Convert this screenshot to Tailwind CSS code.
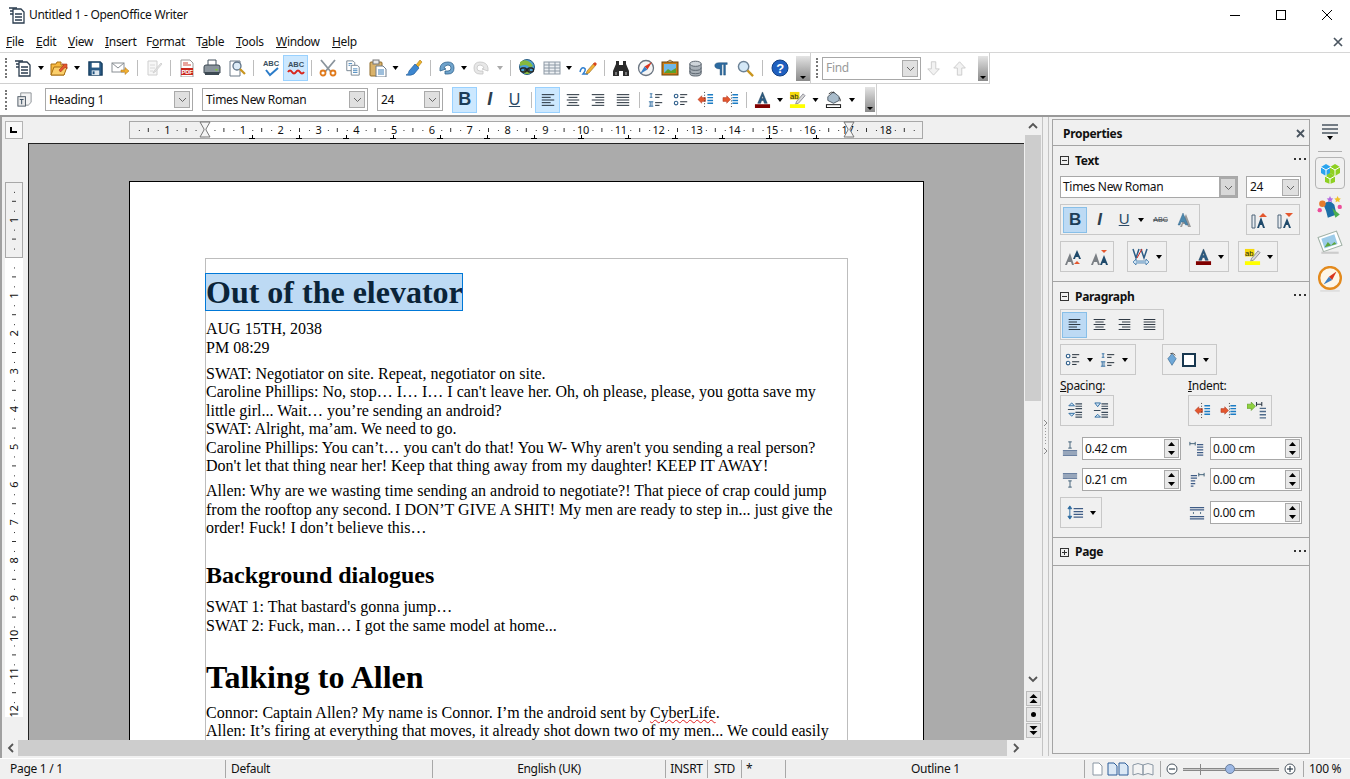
<!DOCTYPE html>
<html lang="en">
  <head>
    <meta charset="UTF-8" />
    <title>Untitled 1 - OpenOffice Writer</title>
    <script src="https://cdn.jsdelivr.net/npm/@tailwindcss/browser@4"></script>
  </head>
  <body class="bg-white">
    <!-- Icon sprite -->
    <svg class="hidden">
      <symbol id="new" viewBox="0 0 18 18"><path d="M5 3h8l3 3v11H5z" fill="#fff" stroke="#2b3d4f" stroke-width="1.300"/><path d="M1 2h8M2 5h3M2 8h3M7 8h7M7 11h7M7 14h7" stroke="#2b3d4f" stroke-width="1.300"/></symbol>
      <symbol id="open" viewBox="0 0 18 18"><path d="M1 5h5l1-2h4v3h5l-2 10H1z" fill="#f6b83f" stroke="#a86f12"/><path d="M1 16l3-8h13l-3 8z" fill="#fbcf6b" stroke="#a86f12"/><path d="M9 11l5-5-2-1h5v5l-1.500-2-5 5z" fill="#e4572e" stroke="#a8321b" stroke-width=".6"/></symbol>
      <symbol id="save" viewBox="0 0 18 18"><path d="M2 2h12l2 2v12H2z" fill="#2a5a85" stroke="#123a5c" stroke-width="1.300"/><rect x="5" y="3" width="8" height="5" fill="#fff"/><rect x="5" y="11" width="8" height="5" fill="#dfe8ef"/><rect x="6" y="12" width="2" height="3" fill="#1f527f"/></symbol>
      <symbol id="mail" viewBox="0 0 18 18"><rect x="1" y="4" width="12" height="9" fill="#fff" stroke="#8a8f94"/><path d="M1 4l6 5 6-5" fill="none" stroke="#8a8f94"/><path d="M10 11h4V8.500l4 3.500-4 3.500V13h-4z" fill="#f2b134" stroke="#a86f12" stroke-width=".5"/></symbol>
      <symbol id="editdoc" viewBox="0 0 18 18"><path d="M3 2h9v14H3z" fill="#f7f7f7" stroke="#cfcfcf"/><path d="M5 6h5M5 9h5M5 12h3" stroke="#d8d8d8"/><path d="M9 12l7-8 1 1-7 8-2 1z" fill="#e6e6e6" stroke="#c8c8c8" stroke-width=".7"/></symbol>
      <symbol id="pdf" viewBox="0 0 18 18"><path d="M3 1h9l3 3v14H3z" fill="#fff" stroke="#9a9a9a"/><path d="M5 4h5M5 6h8" stroke="#d24a3c"/><rect x="3" y="9" width="12" height="7" fill="#c9281e"/><text x="9" y="15" font-size="6" font-weight="700" text-anchor="middle" fill="#fff" font-family="Liberation Sans">PDF</text></symbol>
      <symbol id="print" viewBox="0 0 18 18"><path d="M5 1h8v6H5z" fill="#fff" stroke="#44525f"/><path d="M1 8q0-2 2-2h12q2 0 2 2v6H1z" fill="#8b959d" stroke="#3c4852"/><rect x="2" y="13" width="14" height="3" fill="#3c4852"/><rect x="12.500" y="10" width="2" height="1.500" fill="#7ed321"/></symbol>
      <symbol id="preview" viewBox="0 0 18 18"><path d="M2 2h10v15H2z" fill="#fff" stroke="#6d7b88"/><circle cx="9" cy="7" r="4" fill="#dcebf7" stroke="#5d7388" stroke-width="1.300"/><path d="M12 10l5 5" stroke="#c9951e" stroke-width="2.200"/></symbol>
      <symbol id="spell" viewBox="0 0 18 18"><text x="9" y="7" font-size="7.500" font-weight="700" text-anchor="middle" fill="#3c4f60" font-family="Liberation Sans" letter-spacing="0">ABC</text><path d="M4 11l4 5 8-7" fill="none" stroke="#2b7cc9" stroke-width="2"/></symbol>
      <symbol id="autospell" viewBox="0 0 18 18"><text x="9" y="8" font-size="7.500" font-weight="700" text-anchor="middle" fill="#3c4f60" font-family="Liberation Sans" letter-spacing="0">ABC</text><path d="M1 13q2-3 4 0t4 0 4 0 4 0" fill="none" stroke="#d8261c" stroke-width="2"/></symbol>
      <symbol id="cut" viewBox="0 0 18 18"><path d="M2 1l10 12M16 1L6 13" stroke="#8a949c" stroke-width="1.800"/><circle cx="4" cy="14" r="2.500" fill="none" stroke="#e07a1c" stroke-width="1.800"/><circle cx="14" cy="14" r="2.500" fill="none" stroke="#e07a1c" stroke-width="1.800"/></symbol>
      <symbol id="copy" viewBox="0 0 18 18"><path d="M2 1h7l2 2v9H2z" fill="#fff" stroke="#6e7d8b"/><path d="M7 6h7l2 2v9H7z" fill="#fff" stroke="#6e7d8b"/><path d="M4 4h4M4 6h2M9 10h5M9 12h5M9 14h5" stroke="#3d7fb8"/></symbol>
      <symbol id="paste" viewBox="0 0 18 18"><rect x="1" y="3" width="12" height="14" rx="1" fill="#d9b26a" stroke="#8f6b2a"/><rect x="4" y="1" width="6" height="4" fill="#e8e8e8" stroke="#777"/><path d="M7 7h7l3 3v8H7z" fill="#fff" stroke="#6e7d8b"/><path d="M9 11h6M9 13h6M9 15h6" stroke="#3d7fb8"/></symbol>
      <symbol id="brush" viewBox="0 0 18 18"><path d="M11 6l4-5 2 2-4 5z" fill="#f0b429" stroke="#a8781a" stroke-width=".6"/><path d="M10 5l4 4-5 6q-3 2-8 1 3-1 3-4z" fill="#3d86cf" stroke="#1f5c99" stroke-width=".7"/></symbol>
      <symbol id="undo" viewBox="0 0 18 18"><path d="M3 9q1-6 8-6 6 0 6 6t-6 6H8v-3h3q3 0 3-3t-3-3q-3 0-4 3l2 1-6 2z" fill="#6fa3cc" stroke="#2f628c" stroke-width=".8"/></symbol>
      <symbol id="redo" viewBox="0 0 18 18"><path d="M15 9q-1-6-8-6-6 0-6 6t6 6h3v-3H7q-3 0-3-3t3-3q3 0 4 3l-2 1 6 2z" fill="#e7e7e7" stroke="#c4c4c4" stroke-width=".8"/></symbol>
      <symbol id="globe" viewBox="0 0 18 18"><circle cx="9" cy="8" r="7.500" fill="#4aa0d8" stroke="#2a5d80"/><path d="M2 3q4-3 8-1t5 5q-3 2-5 0T2 7zM5 12q4-1 8 0l-2 3H7z" fill="#86b93f"/><rect x="2.500" y="9" width="6" height="4" rx="2" fill="none" stroke="#222" stroke-width="1.300"/><rect x="9.500" y="9" width="6" height="4" rx="2" fill="none" stroke="#222" stroke-width="1.300"/><path d="M6 11h6" stroke="#222" stroke-width="1.300"/></symbol>
      <symbol id="table" viewBox="0 0 18 18"><rect x="1" y="3" width="16" height="12" fill="#eef1f4" stroke="#8d99a5"/><path d="M1 6h16M1 9h16M1 12h16M6 3v12M12 3v12" stroke="#8d99a5"/></symbol>
      <symbol id="draw" viewBox="0 0 18 18"><path d="M1 13q1-5 4-4t-1 6h5" fill="none" stroke="#2f7fd0" stroke-width="1.500"/><path d="M8 12l7-8 2 2-7 8-3 1z" fill="#f2b134" stroke="#8f6b2a" stroke-width=".6"/><path d="M14 5l2-2 2 2-2 2z" fill="#d8431f"/></symbol>
      <symbol id="binoc" viewBox="0 0 18 18"><path d="M4 2h3v4h4V2h3v3l3 7v5h-6v-5H7v5H1v-5l3-7z" fill="#2b2b2b"/><path d="M3 13h2v3H3zM13 13h2v3h-2z" fill="#777"/></symbol>
      <symbol id="compass" viewBox="0 0 18 18"><circle cx="9" cy="9" r="7.500" fill="#f5f5f5" stroke="#6a7480" stroke-width="1.300"/><path d="M15 3L7.500 7.500l3 3z" fill="#d8351f"/><path d="M3 15l4.500-7.500 3 3z" fill="#3d7fc4"/></symbol>
      <symbol id="gallery" viewBox="0 0 18 18"><path d="M6 3l3-2 3 2" fill="none" stroke="#8f6b2a"/><rect x="1" y="3" width="16" height="13" fill="#c87c15" stroke="#6d4208"/><rect x="3" y="5" width="12" height="9" fill="#6fb7e6"/><path d="M3 14l4-4 3 2 5-3v5z" fill="#5aa02c"/></symbol>
      <symbol id="db" viewBox="0 0 18 18"><path d="M3 4v10q0 3 6 3t6-3V4" fill="#a9b1b8" stroke="#59636c"/><ellipse cx="9" cy="4" rx="6" ry="2.700" fill="#cfd5da" stroke="#59636c"/><path d="M3 8q0 3 6 3t6-3M3 11.500q0 3 6 3t6-3" fill="none" stroke="#59636c"/></symbol>
      <symbol id="pilcrow" viewBox="0 0 18 18"><path d="M7 3h9v2h-2v12h-2V5h-2v12H8V10Q2 10 2 6.500T7 3z" fill="#2c6aa0" stroke="#1d4a72" stroke-width=".5"/></symbol>
      <symbol id="zoom" viewBox="0 0 18 18"><circle cx="7" cy="7" r="5.500" fill="#d4e8f7" stroke="#6c8296" stroke-width="1.500"/><path d="M11 11l6 6" stroke="#c9951e" stroke-width="2.500"/></symbol>
      <symbol id="help" viewBox="0 0 18 18"><circle cx="9" cy="9" r="8" fill="#1f5fbf" stroke="#134183"/><text x="9" y="14" font-size="13" font-weight="700" text-anchor="middle" fill="#fff" font-family="Liberation Sans">?</text></symbol>
      <symbol id="fdown" viewBox="0 0 18 18"><path d="M6 2h5v8h4l-6.500 7L2 10h4z" fill="#f2f2f2" stroke="#c9c9c9"/></symbol>
      <symbol id="fup" viewBox="0 0 18 18"><path d="M6 17h5V9h4L8.500 2 2 9h4z" fill="#f2f2f2" stroke="#c9c9c9"/></symbol>
      <symbol id="style" viewBox="0 0 18 18"><path d="M5 2h11v10l-3 3H5z" fill="#f4f4f4" stroke="#8a8f94"/><rect x="2" y="6" width="8" height="10" fill="#e8e8e8" stroke="#4e5a66"/><path d="M4 9h4M6 9v5" stroke="#34495e"/></symbol>
      <symbol id="left" viewBox="0 0 18 18"><path d="M2 3h14M2 6h10M2 9h14M2 12h10M2 15h14" stroke="#1f2a35" stroke-width="1.100"/></symbol>
      <symbol id="center" viewBox="0 0 18 18"><path d="M2 3h14M4 6h10M2 9h14M4 12h10M2 15h14" stroke="#1f2a35" stroke-width="1.100"/></symbol>
      <symbol id="right" viewBox="0 0 18 18"><path d="M2 3h14M6 6h10M2 9h14M6 12h10M2 15h14" stroke="#1f2a35" stroke-width="1.100"/></symbol>
      <symbol id="just" viewBox="0 0 18 18"><path d="M2 3h14M2 6h14M2 9h14M2 12h14M2 15h14" stroke="#1f2a35" stroke-width="1.100"/></symbol>
      <symbol id="num" viewBox="0 0 18 18"><path d="M2 2h3M3.500 2v4M2 6h3M1 11h5M2.500 11v5M4.500 11v5M1 16h5" stroke="#2c6aa0"/><path d="M8 3h8M8 6h5M8 12h8M8 15h5" stroke="#1f2a35" stroke-width="1.100"/></symbol>
      <symbol id="bul" viewBox="0 0 18 18"><circle cx="3.500" cy="4.500" r="2" fill="#fff" stroke="#2c5d8a" stroke-width="1.200"/><circle cx="3.500" cy="12.500" r="2" fill="#fff" stroke="#2c5d8a" stroke-width="1.200"/><path d="M8 3h8M8 6h5M8 11h8M8 14h5" stroke="#1f2a35" stroke-width="1.100"/></symbol>
      <symbol id="indless" viewBox="0 0 18 18"><path d="M1 9l4-4v2h4v4H5v2z" fill="#e4572e" stroke="#a8321b" stroke-width=".5"/><path d="M11 4h6M11 7h6M11 10h6M11 13h6" stroke="#1c7cc4" stroke-width="1.500"/><path d="M8 1v16" stroke="#333" stroke-dasharray="1 2"/></symbol>
      <symbol id="indmore" viewBox="0 0 18 18"><path d="M9 9L5 5v2H1v4h4v2z" fill="#e4572e" stroke="#a8321b" stroke-width=".5"/><path d="M11 4h6M11 7h6M11 10h6M11 13h6" stroke="#1c7cc4" stroke-width="1.500"/><path d="M10 1v16" stroke="#333" stroke-dasharray="1 2"/></symbol>
      <symbol id="hang" viewBox="0 0 18 18"><path d="M8 5L4 1v2H0v4h4v2z" fill="#8fd13f" stroke="#4c8a14" stroke-width=".5"/><path d="M9 3h5M9 1v4M14 1v4" stroke="#2e3a46"/><path d="M12 7h6M12 10h6M12 13h6M12 16h6" stroke="#4f6b8a" stroke-width="1.300"/></symbol>
      <symbol id="color" viewBox="0 0 18 18"><path d="M9 1l5 12h-3l-1-3H8l-1 3H4zM9 5L8 8h2z" fill="#2c5d86" stroke="#17374f" stroke-width=".5"/><rect x="1" y="14" width="16" height="4" fill="#800000"/></symbol>
      <symbol id="high" viewBox="0 0 18 18"><rect x="1" y="1" width="10" height="8" fill="#f5d90a"/><text x="1" y="8" font-size="8" fill="#222" font-family="Liberation Sans" letter-spacing="0">ab</text><path d="M8 11l7-8 2 2-7 8-3 1z" fill="#d8d8d8" stroke="#667" stroke-width=".7"/><rect x="1" y="14" width="16" height="4" fill="#ffff00"/></symbol>
      <symbol id="charbg" viewBox="0 0 18 18"><path d="M3 6l6-5 6 5v4l-6 3-6-3z" fill="#a9bccb" stroke="#4e5a66"/><path d="M4 3q3-3 6-1" fill="none" stroke="#333"/><path d="M15 7q2 2 1 4" stroke="#333" fill="none"/><rect x="1.500" y="14.500" width="15" height="3" fill="#fff" stroke="#111"/></symbol>
      <symbol id="strike" viewBox="0 0 18 18"><text x="9" y="12" font-size="7.500" text-anchor="middle" fill="#3c4f60" font-family="Liberation Sans" letter-spacing="0">ABC</text><path d="M1 9.500h16" stroke="#333"/></symbol>
      <symbol id="shadow" viewBox="0 0 18 18"><path d="M10 3l5 13h-3l-1-3H7l-1 3H4z" fill="#9a9a9a"/><path d="M7 2l5 12H9.500l-1-3H5l-1 3H2z" fill="#4c88ad" stroke="#2c5d86" stroke-width=".4"/></symbol>
      <symbol id="above" viewBox="0 0 18 18"><path d="M1 4h3v13H1z" fill="#e8edf2" stroke="#4e6478"/><path d="M10 6l4 11h-2l-1-3H9l-1 3H6z" fill="#1f4a6b"/><path d="M8 6l4-4 4 4z" fill="#e4572e"/></symbol>
      <symbol id="below" viewBox="0 0 18 18"><path d="M1 4h3v13H1z" fill="#e8edf2" stroke="#4e6478"/><path d="M10 7l4 10h-2l-1-3H9l-1 3H6z" fill="#1f4a6b"/><path d="M8 2h8l-4 4z" fill="#e4572e"/></symbol>
      <symbol id="grow" viewBox="0 0 18 18"><path d="M5 5l4 12H7l-1-3H3l-1 3H0z" fill="#7a7f84"/><path d="M12 2l4 9h-2l-.7-2h-2.600l-.7 2H8z" fill="#1f4a6b"/><path d="M9 16l3-3 3 3z" fill="#e4572e"/></symbol>
      <symbol id="shrink" viewBox="0 0 18 18"><path d="M5 5l4 12H7l-1-3H3l-1 3H0z" fill="#7a7f84"/><path d="M13 7l4 10h-2l-.7-2h-2.600l-.7 2H9z" fill="#1f4a6b"/><path d="M10 2h6l-3 3z" fill="#e4572e"/></symbol>
      <symbol id="kern" viewBox="0 0 18 18"><path d="M1 1l3 9 3-9M9 1l3 9 3-9" fill="none" stroke="#2c5d86" stroke-width="1.500"/><path d="M5 10l5-9" stroke="#d8261c"/><path d="M1 14l3-3v2h10v-2l3 3-3 3v-2H4v2z" fill="#cfe3f3" stroke="#2c6aa0" stroke-width=".7"/></symbol>
      <symbol id="areafill" viewBox="0 0 18 18"><path d="M1 8l5-6 5 6-5 8z" fill="#6fa8d8" stroke="#2c5d86" stroke-width=".7"/><path d="M4 2q3-2 6 2" fill="none" stroke="#333"/></symbol>
      <symbol id="parup" viewBox="0 0 18 18"><path d="M3 4l3-3 3 3zM3 12h6l-3 3z" fill="#cfe3f3" stroke="#2c6aa0"/><path d="M10 2h7M10 4.500h7M10 7h7M2 8h7M10 11h7M10 13.500h7M10 16h7" stroke="#3a4a5a" stroke-width="1.100"/></symbol>
      <symbol id="pardown" viewBox="0 0 18 18"><path d="M3 1h6L6 5zM3 16l3-3 3 3z" fill="#cfe3f3" stroke="#2c6aa0"/><path d="M10 2h7M10 4.500h7M10 7h7M2 9h7M10 11h7M10 13.500h7M10 16h7" stroke="#3a4a5a" stroke-width="1.100"/></symbol>
      <symbol id="before" viewBox="0 0 18 18"><path d="M7 1h4M9 1v7M7 8h4" stroke="#34566f"/><path d="M1 11h16M1 13.500h16M1 16h16" stroke="#3f5c86" stroke-width="1.400"/></symbol>
      <symbol id="after" viewBox="0 0 18 18"><path d="M1 2h16M1 4.500h16M1 7h16" stroke="#3f5c86" stroke-width="1.400"/><path d="M7 10h4M9 10v7M7 17h4" stroke="#34566f"/></symbol>
      <symbol id="indl" viewBox="0 0 18 18"><path d="M1 3h6M1 1v4M7 1v4" stroke="#34566f"/><path d="M9 4h7M9 7h7M9 10h7M9 13h7M9 16h7" stroke="#3f5c86" stroke-width="1.400"/></symbol>
      <symbol id="indr" viewBox="0 0 18 18"><path d="M11 3h6M11 1v4M17 1v4" stroke="#34566f"/><path d="M2 4h7M2 7h7M2 10h5M2 13h5M2 16h3" stroke="#3f5c86" stroke-width="1.400"/></symbol>
      <symbol id="first" viewBox="0 0 18 18"><path d="M1 3h16M1 5.500h16" stroke="#3f5c86" stroke-width="1.400"/><path d="M5 8v2M13 8v2" stroke="#34566f"/><path d="M1 13h16M1 15.500h16" stroke="#3f5c86" stroke-width="1.400"/></symbol>
      <symbol id="lines" viewBox="0 0 18 18"><path d="M3 2L1 5h4zM3 16L1 13h4zM3 4v10" fill="#2c6aa0" stroke="#2c6aa0"/><path d="M7 5h10M7 8h10M7 11h10M7 14h10" stroke="#3f5c86" stroke-width="1.300"/></symbol>
      <symbol id="dots" viewBox="0 0 13 3"><path d="M0 0h2v2H0zM5 0h2v2H5zM10 0h2v2h-2z" fill="#333"/></symbol>
      <symbol id="cubes" viewBox="0 0 24 24"><path d="M3 6l5-3 5 3v6l-5 3-5-3z" fill="#2aa4ee"/><path d="M12 6l5-3 5 3v6l-5 3-5-3z" fill="#8ed022"/><path d="M7 15l5-3 5 3v6l-5 2-5-2z" fill="#8ed022"/><path d="M3 6l5 3 5-3M8 9v6M12 6l5 3 5-3M17 9v6M7 15l5 3 5-3M12 18v5" stroke="#fff" fill="none"/></symbol>
      <symbol id="stylist" viewBox="0 0 24 24"><path d="M6 9q5-6 10 0l2 9-8 3q-1-6-4-12z" fill="#1d6fa8"/><path d="M14 12l7 6-4 3z" fill="#4caf50"/><circle cx="5" cy="8" r="3" fill="#e67c2e"/><path d="M12 1l1 2 2 .3-1.500 1.500.4 2-1.900-1-1.900 1 .4-2L9 3.300 11 3z" fill="#b56be0"/><path d="M19 1l1 2 2 .3-1.500 1.500.4 2-1.900-1-1.900 1 .4-2L16 3.300 18 3z" fill="#f0c12a"/><circle cx="2.500" cy="14" r="2" fill="#ec4d9a"/><circle cx="21" cy="11" r="2" fill="#ec4d9a"/></symbol>
      <symbol id="pics" viewBox="0 0 24 24"><path d="M1 7l17-6 5 13-17 6z" fill="#fff" stroke="#9fb0a5"/><path d="M4 8l12-4 3 9-12 4z" fill="#9ccbe8"/><path d="M7 16l3-5 3 3 3-3 2 2z" fill="#5da63c"/><path d="M4 21h16" stroke="#ccc" stroke-width="2"/></symbol>
      <symbol id="navig" viewBox="0 0 24 24"><circle cx="12" cy="11" r="10" fill="#fdf6e8" stroke="#e38a1d" stroke-width="2.200"/><path d="M18 5l-7 5 3 3z" fill="#d8351f"/><path d="M6 17l5-7 3 3z" fill="#3d7fc4"/><path d="M3 23h18" stroke="#ddd" stroke-width="1.500"/></symbol>
      <symbol id="single" viewBox="0 0 14 14"><path d="M3 1h6l3 3v9H3z" fill="#fff" stroke="#8a97a4"/></symbol>
      <symbol id="double" viewBox="0 0 22 14"><path d="M1 1h6l3 3v9H1zM12 1h6l3 3v9h-9z" fill="#dbe8f5" stroke="#2c5d99"/></symbol>
      <symbol id="book" viewBox="0 0 22 14"><path d="M1 3q5-3 10 0v10Q6 10 1 13zM11 3q5-3 10 0v10q-5-3-10 0z" fill="#f4f4f4" stroke="#8a97a4"/></symbol>
    </svg>

    <div class="w-[1350px] h-[779px] flex flex-col overflow-hidden text-[12px] text-[#111] tracking-[-0.3px] [font-family:'Noto_Sans',sans-serif]">
      <!-- Title bar -->
      <div class="h-[30px] flex items-center shrink-0">
        <svg class="size-[18px] ml-[8px]"><use href="#new" /></svg>
        <span class="ml-[3px]">Untitled 1 - OpenOffice Writer</span>
        <div class="ml-auto flex items-center">
          <svg class="w-[46px] h-[12px]" viewBox="0 0 46 12"><path d="M18 6.500h10" stroke="#000"/></svg>
          <svg class="w-[46px] h-[12px]" viewBox="0 0 46 12"><rect x="18.500" y="1.500" width="9" height="9" fill="none" stroke="#000"/></svg>
          <svg class="w-[46px] h-[12px] mr-0" viewBox="0 0 46 12"><path d="M18 1l10 10M28 1L18 11" stroke="#000"/></svg>
        </div>
      </div>

      <!-- Menu bar -->
      <div class="h-[23px] flex items-center pl-[6px] pt-[2px] border-b border-[#d6d6d6] shrink-0">
        <span class="w-[30px]"><u>F</u>ile</span>
        <span class="w-[32px]"><u>E</u>dit</span>
        <span class="w-[37px]"><u>V</u>iew</span>
        <span class="w-[41px]"><u>I</u>nsert</span>
        <span class="w-[50px]">F<u>o</u>rmat</span>
        <span class="w-[40px]">T<u>a</u>ble</span>
        <span class="w-[40px]"><u>T</u>ools</span>
        <span class="w-[56px]"><u>W</u>indow</span>
        <span><u>H</u>elp</span>
        <svg class="ml-auto mr-[7px] size-[10px]" viewBox="0 0 10 10"><path d="M1 1l8 8M9 1L1 9" stroke="#4a5560" stroke-width="1.700"/></svg>
      </div>

      <!-- Standard + Find toolbars -->
      <div class="h-[31px] flex items-center w-[990px] border-b border-r border-[#d0d0d0] shrink-0">
        <div class="w-[11px] h-[20px] flex justify-center"><div class="w-[2px] border-l-2 border-dotted border-[#777]"></div></div>
        <div class="w-[24px] flex justify-center"><svg class="size-[18px]"><use href="#new" /></svg></div>
        <svg class="w-[12px] h-[4px]" viewBox="0 0 12 4"><path d="M3 0h6L6 4z" /></svg>
        <div class="w-[24px] flex justify-center"><svg class="size-[18px]"><use href="#open" /></svg></div>
        <svg class="w-[12px] h-[4px]" viewBox="0 0 12 4"><path d="M3 0h6L6 4z" /></svg>
        <div class="w-[25px] flex justify-center"><svg class="size-[17px]"><use href="#save" /></svg></div>
        <div class="w-[24px] flex justify-center"><svg class="size-[18px]"><use href="#mail" /></svg></div>
        <div class="w-[10px] flex justify-center"><div class="w-px h-[16px] bg-[#bdbdbd]"></div></div>
        <div class="w-[23px] flex justify-center"><svg class="size-[18px]"><use href="#editdoc" /></svg></div>
        <div class="w-[10px] flex justify-center"><div class="w-px h-[16px] bg-[#bdbdbd]"></div></div>
        <div class="w-[24px] flex justify-center"><svg class="size-[18px]"><use href="#pdf" /></svg></div>
        <div class="w-[26px] flex justify-center"><svg class="size-[18px]"><use href="#print" /></svg></div>
        <div class="w-[24px] flex justify-center"><svg class="size-[18px]"><use href="#preview" /></svg></div>
        <div class="w-[9px] flex justify-center"><div class="w-px h-[16px] bg-[#bdbdbd]"></div></div>
        <div class="w-[25px] flex justify-center"><svg class="size-[18px]"><use href="#spell" /></svg></div>
        <div class="w-[25px] h-[26px] flex items-center justify-center bg-[#cce8ff] border border-[#99d1ff]"><svg class="size-[18px]"><use href="#autospell" /></svg></div>
        <div class="w-[7px] flex justify-center"><div class="w-px h-[16px] bg-[#bdbdbd]"></div></div>
        <div class="w-[25px] flex justify-center"><svg class="size-[18px]"><use href="#cut" /></svg></div>
        <div class="w-[25px] flex justify-center"><svg class="size-[16px]"><use href="#copy" /></svg></div>
        <div class="w-[25px] flex justify-center"><svg class="size-[18px]"><use href="#paste" /></svg></div>
        <svg class="w-[11px] h-[4px]" viewBox="0 0 11 4"><path d="M2.500 0h6l-3 4z" /></svg>
        <div class="w-[26px] flex justify-center"><svg class="size-[18px]"><use href="#brush" /></svg></div>
        <div class="w-[6px] flex justify-center"><div class="w-px h-[16px] bg-[#bdbdbd]"></div></div>
        <div class="w-[25px] flex justify-center"><svg class="size-[18px]"><use href="#undo" /></svg></div>
        <svg class="w-[12px] h-[4px]" viewBox="0 0 12 4"><path d="M3 0h6L6 4z" /></svg>
        <div class="w-[24px] flex justify-center"><svg class="size-[18px]"><use href="#redo" /></svg></div>
        <svg class="w-[12px] h-[4px]" viewBox="0 0 12 4"><path d="M3 0h6L6 4z" fill="#aaa" /></svg>
        <div class="w-[8px] flex justify-center"><div class="w-px h-[16px] bg-[#bdbdbd]"></div></div>
        <div class="w-[26px] flex justify-center"><svg class="size-[18px]"><use href="#globe" /></svg></div>
        <div class="w-[23px] flex justify-center"><svg class="size-[18px]"><use href="#table" /></svg></div>
        <svg class="w-[12px] h-[4px]" viewBox="0 0 12 4"><path d="M3 0h6L6 4z" /></svg>
        <div class="w-[26px] flex justify-center"><svg class="size-[18px]"><use href="#draw" /></svg></div>
        <div class="w-[7px] flex justify-center"><div class="w-px h-[16px] bg-[#bdbdbd]"></div></div>
        <div class="w-[26px] flex justify-center"><svg class="size-[18px]"><use href="#binoc" /></svg></div>
        <div class="w-[23px] flex justify-center"><svg class="size-[18px]"><use href="#compass" /></svg></div>
        <div class="w-[26px] flex justify-center"><svg class="size-[18px]"><use href="#gallery" /></svg></div>
        <div class="w-[25px] flex justify-center"><svg class="size-[17px]"><use href="#db" /></svg></div>
        <div class="w-[26px] flex justify-center"><svg class="size-[16px]"><use href="#pilcrow" /></svg></div>
        <div class="w-[23px] flex justify-center"><svg class="size-[17px]"><use href="#zoom" /></svg></div>
        <div class="w-[10px] flex justify-center"><div class="w-px h-[16px] bg-[#bdbdbd]"></div></div>
        <div class="w-[25px] flex justify-center"><svg class="size-[18px]"><use href="#help" /></svg></div>
        <div class="ml-[4px] w-[14px] h-[25px] flex items-end justify-center pb-[2px] bg-gradient-to-b from-[#e4e4e4] to-[#8a8a8a]"><svg class="w-[6px] h-[3px]" viewBox="0 0 6 3"><path d="M0 0h6L3 3z" /></svg></div>
        <div class="w-px h-full bg-[#d0d0d0]"></div>
        <div class="w-[11px] h-[20px] flex justify-center"><div class="w-[2px] border-l-2 border-dotted border-[#777]"></div></div>
        <div class="w-[99px] h-[23px] flex items-center justify-between border border-[#a8a8a8] pl-[3px] bg-white text-[#9a9a9a]">
          <span>Find</span>
          <div class="w-[16px] h-[17px] mr-[2px] flex items-center justify-center bg-[#e0e0e0] border border-[#aaa]"><svg class="size-[9px]" viewBox="0 0 9 9"><path d="M1 3l3.500 3.500L8 3" fill="none" stroke="#666" /></svg></div>
        </div>
        <div class="w-[26px] flex justify-center"><svg class="size-[16px]"><use href="#fdown" /></svg></div>
        <div class="w-[25px] flex justify-center"><svg class="size-[16px]"><use href="#fup" /></svg></div>
        <div class="ml-[6px] w-[10px] h-[25px] flex items-end justify-center pb-[2px] bg-gradient-to-b from-[#e4e4e4] to-[#8a8a8a]"><svg class="w-[6px] h-[3px]" viewBox="0 0 6 3"><path d="M0 0h6L3 3z" /></svg></div>
      </div>

      <!-- Formatting toolbar -->
      <div class="h-[31px] flex items-center w-[877px] border-r border-[#d0d0d0] shrink-0">
        <div class="w-[11px] h-[20px] flex justify-center"><div class="w-[2px] border-l-2 border-dotted border-[#777]"></div></div>
        <div class="w-[27px] flex justify-center"><svg class="size-[17px]"><use href="#style" /></svg></div>
        <div class="ml-[7px] w-[148px] h-[23px] flex items-center justify-between border border-[#a8a8a8] pl-[3px] bg-white">
          <span>Heading 1</span>
          <div class="w-[16px] h-[17px] mr-[2px] flex items-center justify-center bg-[#e0e0e0] border border-[#aaa]"><svg class="size-[9px]" viewBox="0 0 9 9"><path d="M1 3l3.500 3.500L8 3" fill="none" stroke="#666" /></svg></div>
        </div>
        <div class="ml-[9px] w-[166px] h-[23px] flex items-center justify-between border border-[#a8a8a8] pl-[3px] bg-white">
          <span>Times New Roman</span>
          <div class="w-[16px] h-[17px] mr-[2px] flex items-center justify-center bg-[#e0e0e0] border border-[#aaa]"><svg class="size-[9px]" viewBox="0 0 9 9"><path d="M1 3l3.500 3.500L8 3" fill="none" stroke="#666" /></svg></div>
        </div>
        <div class="ml-[9px] w-[66px] h-[23px] flex items-center justify-between border border-[#a8a8a8] pl-[3px] bg-white">
          <span>24</span>
          <div class="w-[16px] h-[17px] mr-[2px] flex items-center justify-center bg-[#e0e0e0] border border-[#aaa]"><svg class="size-[9px]" viewBox="0 0 9 9"><path d="M1 3l3.500 3.500L8 3" fill="none" stroke="#666" /></svg></div>
        </div>
        <div class="ml-[9px] w-[25px] h-[26px] flex items-center justify-center bg-[#cce8ff] border border-[#99d1ff] text-[18px] font-bold text-[#1c3d58] [font-family:'Liberation_Sans',sans-serif]">B</div>
        <div class="w-[25px] flex justify-center text-[18px] italic font-bold text-[#2c3e4e] [font-family:'Liberation_Sans',sans-serif]">I</div>
        <div class="w-[25px] flex justify-center text-[16px] underline text-[#2c4a66] [font-family:'Liberation_Sans',sans-serif]">U</div>
        <div class="w-[8px] flex justify-center"><div class="w-px h-[16px] bg-[#bdbdbd]"></div></div>
        <div class="w-[25px] h-[26px] flex items-center justify-center bg-[#cce8ff] border border-[#99d1ff]"><svg class="size-[16px]"><use href="#left" /></svg></div>
        <div class="w-[25px] flex justify-center"><svg class="size-[16px]"><use href="#center" /></svg></div>
        <div class="w-[25px] flex justify-center"><svg class="size-[16px]"><use href="#right" /></svg></div>
        <div class="w-[25px] flex justify-center"><svg class="size-[16px]"><use href="#just" /></svg></div>
        <div class="w-[8px] flex justify-center"><div class="w-px h-[16px] bg-[#bdbdbd]"></div></div>
        <div class="w-[25px] flex justify-center"><svg class="size-[16px]"><use href="#num" /></svg></div>
        <div class="w-[25px] flex justify-center"><svg class="size-[16px]"><use href="#bul" /></svg></div>
        <div class="w-[25px] flex justify-center"><svg class="size-[17px]"><use href="#indless" /></svg></div>
        <div class="w-[25px] flex justify-center"><svg class="size-[17px]"><use href="#indmore" /></svg></div>
        <div class="w-[7px] flex justify-center"><div class="w-px h-[16px] bg-[#bdbdbd]"></div></div>
        <div class="w-[24px] flex justify-center"><svg class="size-[17px]"><use href="#color" /></svg></div>
        <svg class="w-[12px] h-[4px]" viewBox="0 0 12 4"><path d="M3 0h6L6 4z" /></svg>
        <div class="w-[23px] flex justify-center"><svg class="size-[17px]"><use href="#high" /></svg></div>
        <svg class="w-[13px] h-[4px]" viewBox="0 0 13 4"><path d="M3.500 0h6l-3 4z" /></svg>
        <div class="w-[23px] flex justify-center"><svg class="size-[17px]"><use href="#charbg" /></svg></div>
        <svg class="w-[14px] h-[4px]" viewBox="0 0 14 4"><path d="M4 0h6L7 4z" /></svg>
        <div class="ml-[6px] w-[10px] h-[25px] flex items-end justify-center pb-[2px] bg-gradient-to-b from-[#e4e4e4] to-[#8a8a8a]"><svg class="w-[6px] h-[3px]" viewBox="0 0 6 3"><path d="M0 0h6L3 3z" /></svg></div>
      </div>

      <!-- Main area -->
      <div class="flex-1 min-h-0 flex bg-[#f0f0f0] border-t-2 border-[#999]">
        <!-- Writer area -->
        <div class="w-[1042px] flex flex-col border-l-2 border-[#a0a0a0]">
          <div class="flex-1 min-h-0 flex">
            <div class="w-[1022px] flex flex-col">
              <!-- Horizontal ruler -->
              <div class="h-[26px] flex items-center shrink-0">
                <div class="ml-[3px] w-[18px] h-[18px] flex items-center justify-center bg-[#f8f8f8] border border-[#b4b4b4]">
                  <svg class="size-[8px]" viewBox="0 0 8 8"><path d="M1 1v5h6" fill="none" stroke="#000" stroke-width="2" /></svg>
                </div>
                <svg id="hruler" class="ml-[106px] w-[794px] h-[18px]" viewBox="0 0 794 18"></svg>
              </div>
              <div class="flex-1 min-h-0 flex">
                <!-- Vertical ruler -->
                <div class="w-[26px] pt-[39px] pl-[3px] shrink-0">
                  <svg id="vruler" class="w-[18px] h-[535px]" viewBox="0 0 18 535"></svg>
                </div>
                <!-- Document view -->
                <div class="flex-1 min-w-0 bg-[#ababab] border-t border-l border-[#222] pl-[100px] pt-[37px] overflow-hidden">
                  <div class="w-[795px] h-[700px] bg-white border border-black pl-[75px] pt-[76px] [font-family:'Liberation_Serif',serif] tracking-normal text-black text-[16px] leading-[18.4px]">
                    <div class="w-[643px] h-[620px] border-t border-x border-[#bdbdbd] whitespace-nowrap">
                      <div class="mt-[14px] -ml-px w-[258px] h-[38px] flex items-center bg-[#bddaf4] border border-[#0078d7] text-[32px] font-bold text-[#0b2438]">Out of the elevator</div>
                      <p class="mt-[8px] leading-[19px]">AUG 15TH, 2038<br />PM 08:29</p>
                      <p class="mt-[8px]">SWAT: Negotiator on site. Repeat, negotiator on site.<br />Caroline Phillips: No, stop… I… I… I can't leave her. Oh, oh please, please, you gotta save my<br />little girl... Wait… you’re sending an android?<br />SWAT: Alright, ma’am. We need to go.<br />Caroline Phillips: You can’t… you can't do that! You W- Why aren't you sending a real person?<br />Don't let that thing near her! Keep that thing away from my daughter! KEEP IT AWAY!</p>
                      <p class="mt-[7px]">Allen: Why are we wasting time sending an android to negotiate?! That piece of crap could jump<br />from the rooftop any second. I DON’T GIVE A SHIT! My men are ready to step in... just give the<br />order! Fuck! I don’t believe this…</p>
                      <h2 class="mt-[24px] text-[24px] leading-[27.6px] font-bold">Background dialogues</h2>
                      <p class="mt-[8px] leading-[19px]">SWAT 1: That bastard's gonna jump…<br />SWAT 2: Fuck, man… I got the same model at home...</p>
                      <h1 class="mt-[24px] text-[32px] leading-[36.8px] font-bold">Talking to Allen</h1>
                      <p class="mt-[8px]">Connor: Captain Allen? My name is Connor. I’m the android sent by <span class="underline decoration-wavy decoration-[#e02020] decoration-1">CyberLife</span>.<br />Allen: It’s firing at everything that moves, it already shot down two of my men... We could easily</p>
                    </div>
                  </div>
                </div>
              </div>
            </div>
            <!-- Vertical scrollbar -->
            <div class="flex-1 flex flex-col items-center">
              <svg class="h-[18px] w-[10px] shrink-0" viewBox="0 0 10 18"><path d="M1 11l4-4 4 4" fill="none" stroke="#555" stroke-width="1.800" /></svg>
              <div class="w-[16px] flex-1 min-h-0 flex flex-col">
                <div class="h-[266px] bg-[#cdcdcd]"></div>
              </div>
              <svg class="h-[16px] w-[10px] shrink-0" viewBox="0 0 10 16"><path d="M1 5l4 4 4-4" fill="none" stroke="#555" stroke-width="1.800" /></svg>
              <div class="mt-[3px] w-[15px] h-[15px] flex items-center justify-center bg-[#e6e6e6] border border-[#bbb]"><svg class="size-[9px]" viewBox="0 0 9 9"><path d="M4.500 0l4 4h-8zM4.500 5l4 4h-8z" /></svg></div>
              <div class="mt-px w-[15px] h-[15px] flex items-center justify-center bg-[#e6e6e6] border border-[#bbb]"><div class="size-[5px] rounded-full bg-black"></div></div>
              <div class="mt-px mb-[2px] w-[15px] h-[15px] flex items-center justify-center bg-[#e6e6e6] border border-[#bbb]"><svg class="size-[9px]" viewBox="0 0 9 9"><path d="M.5 0h8l-4 4zM.5 5h8l-4 4z" /></svg></div>
            </div>
          </div>
          <!-- Horizontal scrollbar -->
          <div class="h-[16px] flex items-center shrink-0 mb-[2px]">
            <svg class="ml-[4px] w-[10px] h-[10px]" viewBox="0 0 10 10"><path d="M7 1L3 5l4 4" fill="none" stroke="#555" stroke-width="1.800" /></svg>
            <div class="ml-[2px] w-[989px] h-full bg-[#cdcdcd]"></div>
            <svg class="ml-[4px] w-[10px] h-[10px]" viewBox="0 0 10 10"><path d="M3 1l4 4-4 4" fill="none" stroke="#555" stroke-width="1.800" /></svg>
          </div>
        </div>

        <!-- Splitter -->
        <div class="w-[10px] mb-[2px] pr-[3px]">
          <div class="h-full flex items-center justify-center border-x border-[#c4c4c4]">
            <svg class="w-[5px] h-[36px]" viewBox="0 0 5 36"><path d="M1 1l3 3-3 3M1 29l3 3-3 3" fill="none" stroke="#888" /><path d="M2.500 9v18" stroke="#999" stroke-dasharray="1 2" /></svg>
          </div>
        </div>

        <!-- Sidebar deck -->
        <div class="w-[258px] mt-[2px] mb-[4px] flex flex-col border border-[#a4a4a4]">
          <div class="h-[26px] pt-[2px] flex items-center justify-between pl-[10px] pr-[4px] border-b border-[#a4a4a4] shrink-0">
            <span class="font-bold">Properties</span>
            <svg class="size-[9px]" viewBox="0 0 9 9"><path d="M1 1l7 7M8 1L1 8" stroke="#4a5560" stroke-width="1.800" /></svg>
          </div>

          <!-- Text panel -->
          <div class="h-[136px] px-[7px] border-b border-[#a4a4a4] shrink-0">
            <div class="h-[27px] pt-[2px] flex items-center">
              <div class="size-[9px] flex items-center justify-center border border-[#333]"><div class="w-[5px] h-px bg-[#333]"></div></div>
              <span class="ml-[6px] font-bold">Text</span>
              <svg class="ml-auto w-[13px] h-[3px] mb-[2px] mr-[-5px]"><use href="#dots" /></svg>
            </div>
            <div class="flex mt-[3px]">
              <div class="w-[178px] h-[22px] flex items-center justify-between border border-[#a8a8a8] pl-[2px] bg-white">
                <span>Times New Roman</span>
                <div class="w-[18px] h-full flex items-center justify-center bg-[#d8d8d8] border-2 border-[#aaa]"><svg class="size-[9px]" viewBox="0 0 9 9"><path d="M1 3l3.500 3.500L8 3" fill="none" stroke="#666" /></svg></div>
              </div>
              <div class="ml-[8px] w-[55px] h-[22px] flex items-center justify-between border border-[#a8a8a8] pl-[3px] bg-white">
                <span>24</span>
                <div class="w-[17px] h-[17px] mr-px flex items-center justify-center bg-[#e0e0e0] border border-[#aaa]"><svg class="size-[9px]" viewBox="0 0 9 9"><path d="M1 3l3.500 3.500L8 3" fill="none" stroke="#666" /></svg></div>
              </div>
            </div>
            <div class="flex mt-[6px]">
              <div class="w-[140px] h-[31px] flex items-center pl-[2px] border border-[#c8c8c8]">
                <div class="w-[24px] h-[26px] flex items-center justify-center bg-[#bddaf4] border border-[#88bfe8] text-[17px] font-bold text-[#1c3d58] [font-family:'Liberation_Sans',sans-serif]">B</div>
                <div class="w-[25px] flex justify-center text-[17px] italic font-bold text-[#2c3e4e] [font-family:'Liberation_Sans',sans-serif]">I</div>
                <div class="w-[24px] flex justify-center text-[15px] underline text-[#2c4a66] [font-family:'Liberation_Sans',sans-serif]">U</div>
                <svg class="w-[10px] h-[4px]" viewBox="0 0 10 4"><path d="M2 0h6L5 4z" /></svg>
                <div class="w-[28px] flex justify-center"><svg class="size-[17px]"><use href="#strike" /></svg></div>
                <div class="w-[22px] flex justify-center"><svg class="size-[18px]"><use href="#shadow" /></svg></div>
              </div>
              <div class="ml-[46px] w-[54px] h-[31px] flex items-center justify-around border border-[#c8c8c8]">
                <svg class="size-[18px]"><use href="#above" /></svg>
                <svg class="size-[18px]"><use href="#below" /></svg>
              </div>
            </div>
            <div class="flex mt-[6px]">
              <div class="w-[54px] h-[31px] flex items-center justify-around border border-[#c8c8c8]">
                <svg class="size-[18px]"><use href="#grow" /></svg>
                <svg class="size-[18px]"><use href="#shrink" /></svg>
              </div>
              <div class="ml-[13px] w-[40px] h-[31px] flex items-center justify-center gap-[6px] border border-[#c8c8c8]">
                <svg class="size-[18px]"><use href="#kern" /></svg>
                <svg class="w-[6px] h-[4px]" viewBox="0 0 6 4"><path d="M0 0h6L3 4z" /></svg>
              </div>
              <div class="ml-[22px] w-[40px] h-[31px] flex items-center justify-center gap-[6px] border border-[#c8c8c8]">
                <svg class="size-[17px]"><use href="#color" /></svg>
                <svg class="w-[6px] h-[4px]" viewBox="0 0 6 4"><path d="M0 0h6L3 4z" /></svg>
              </div>
              <div class="ml-[9px] w-[40px] h-[31px] flex items-center justify-center gap-[6px] border border-[#c8c8c8]">
                <svg class="size-[17px]"><use href="#high" /></svg>
                <svg class="w-[6px] h-[4px]" viewBox="0 0 6 4"><path d="M0 0h6L3 4z" /></svg>
              </div>
            </div>
          </div>

          <!-- Paragraph panel -->
          <div class="h-[256px] px-[7px] border-b border-[#a4a4a4] shrink-0">
            <div class="h-[27px] pt-[2px] flex items-center">
              <div class="size-[9px] flex items-center justify-center border border-[#333]"><div class="w-[5px] h-px bg-[#333]"></div></div>
              <span class="ml-[6px] font-bold">Paragraph</span>
              <svg class="ml-auto w-[13px] h-[3px] mb-[2px] mr-[-5px]"><use href="#dots" /></svg>
            </div>
            <div class="w-[104px] h-[31px] flex items-center pl-[1px] border border-[#c8c8c8]">
              <div class="w-[25px] h-[26px] flex items-center justify-center bg-[#bddaf4] border border-[#88bfe8]"><svg class="size-[15px]"><use href="#left" /></svg></div>
              <div class="w-[25px] flex justify-center"><svg class="size-[15px]"><use href="#center" /></svg></div>
              <div class="w-[25px] flex justify-center"><svg class="size-[15px]"><use href="#right" /></svg></div>
              <div class="w-[25px] flex justify-center"><svg class="size-[15px]"><use href="#just" /></svg></div>
            </div>
            <div class="flex mt-[4px]">
              <div class="w-[76px] h-[31px] flex items-center justify-center border border-[#c8c8c8]">
                <svg class="size-[16px]"><use href="#bul" /></svg>
                <svg class="w-[19px] h-[4px]" viewBox="0 0 19 4"><path d="M6 0h6L9 4z" /></svg>
                <svg class="size-[16px]"><use href="#num" /></svg>
                <svg class="w-[15px] h-[4px]" viewBox="0 0 15 4"><path d="M6 0h6L9 4z" /></svg>
              </div>
              <div class="ml-[26px] w-[55px] h-[31px] flex items-center justify-center border border-[#c8c8c8]">
                <svg class="size-[15px]"><use href="#areafill" /></svg>
                <div class="size-[14px] bg-white border-2 border-[#17374f]"></div>
                <svg class="w-[16px] h-[4px]" viewBox="0 0 16 4"><path d="M7 0h6l-3 4z" /></svg>
              </div>
            </div>
            <div class="flex mt-[2px] h-[18px] items-center">
              <span class="w-[128px]"><u>S</u>pacing:</span>
              <span><u>I</u>ndent:</span>
            </div>
            <div class="flex">
              <div class="w-[54px] h-[31px] flex items-center justify-around border border-[#c8c8c8]">
                <svg class="size-[17px]"><use href="#parup" /></svg>
                <svg class="size-[17px]"><use href="#pardown" /></svg>
              </div>
              <div class="ml-[74px] w-[84px] h-[31px] flex items-center justify-around border border-[#c8c8c8]">
                <svg class="size-[17px]"><use href="#indless" /></svg>
                <svg class="size-[17px]"><use href="#indmore" /></svg>
                <svg class="size-[19px]"><use href="#hang" /></svg>
              </div>
            </div>
            <!-- Spin fields -->
            <div class="flex mt-[11px] items-center">
              <svg class="ml-[2px] size-[16px]"><use href="#before" /></svg>
              <div class="ml-[4px] w-[99px] h-[23px] flex items-center justify-between border border-[#a8a8a8] bg-white pl-[2px]">
                <span>0.42 cm</span>
                <div class="w-[15px] h-[19px] mr-px flex flex-col border border-[#aaa] bg-[#e8e8e8] items-center justify-around"><svg class="w-[7px] h-[4px]" viewBox="0 0 7 4"><path d="M0 4h7L3.500 0z" /></svg><svg class="w-[7px] h-[4px]" viewBox="0 0 7 4"><path d="M0 0h7L3.500 4z" /></svg></div>
              </div>
              <svg class="ml-[8px] size-[16px]"><use href="#indl" /></svg>
              <div class="ml-[5px] w-[92px] h-[23px] flex items-center justify-between border border-[#a8a8a8] bg-white pl-[2px]">
                <span>0.00 cm</span>
                <div class="w-[15px] h-[19px] mr-px flex flex-col border border-[#aaa] bg-[#e8e8e8] items-center justify-around"><svg class="w-[7px] h-[4px]" viewBox="0 0 7 4"><path d="M0 4h7L3.500 0z" /></svg><svg class="w-[7px] h-[4px]" viewBox="0 0 7 4"><path d="M0 0h7L3.500 4z" /></svg></div>
              </div>
            </div>
            <div class="flex mt-[8px] items-center">
              <svg class="ml-[2px] size-[16px]"><use href="#after" /></svg>
              <div class="ml-[4px] w-[99px] h-[23px] flex items-center justify-between border border-[#a8a8a8] bg-white pl-[2px]">
                <span>0.21 cm</span>
                <div class="w-[15px] h-[19px] mr-px flex flex-col border border-[#aaa] bg-[#e8e8e8] items-center justify-around"><svg class="w-[7px] h-[4px]" viewBox="0 0 7 4"><path d="M0 4h7L3.500 0z" /></svg><svg class="w-[7px] h-[4px]" viewBox="0 0 7 4"><path d="M0 0h7L3.500 4z" /></svg></div>
              </div>
              <svg class="ml-[8px] size-[16px]"><use href="#indr" /></svg>
              <div class="ml-[5px] w-[92px] h-[23px] flex items-center justify-between border border-[#a8a8a8] bg-white pl-[2px]">
                <span>0.00 cm</span>
                <div class="w-[15px] h-[19px] mr-px flex flex-col border border-[#aaa] bg-[#e8e8e8] items-center justify-around"><svg class="w-[7px] h-[4px]" viewBox="0 0 7 4"><path d="M0 4h7L3.500 0z" /></svg><svg class="w-[7px] h-[4px]" viewBox="0 0 7 4"><path d="M0 0h7L3.500 4z" /></svg></div>
              </div>
            </div>
            <div class="flex mt-[6px] items-center">
              <div class="w-[42px] h-[31px] flex items-center justify-center gap-[6px] border border-[#c8c8c8]">
                <svg class="size-[17px]"><use href="#lines" /></svg>
                <svg class="w-[6px] h-[4px]" viewBox="0 0 6 4"><path d="M0 0h6L3 4z" /></svg>
              </div>
              <svg class="ml-[87px] size-[16px]"><use href="#first" /></svg>
              <div class="ml-[5px] w-[92px] h-[23px] flex items-center justify-between border border-[#a8a8a8] bg-white pl-[2px]">
                <span>0.00 cm</span>
                <div class="w-[15px] h-[19px] mr-px flex flex-col border border-[#aaa] bg-[#e8e8e8] items-center justify-around"><svg class="w-[7px] h-[4px]" viewBox="0 0 7 4"><path d="M0 4h7L3.500 0z" /></svg><svg class="w-[7px] h-[4px]" viewBox="0 0 7 4"><path d="M0 0h7L3.500 4z" /></svg></div>
              </div>
            </div>
          </div>

          <!-- Page panel -->
          <div class="h-[28px] pt-[1px] px-[7px] flex items-center border-b border-[#a4a4a4] shrink-0">
            <div class="size-[9px] flex items-center justify-center border border-[#333]"><svg class="size-[7px]" viewBox="0 0 7 7"><path d="M1 3.500h5M3.500 1v5" stroke="#333" /></svg></div>
            <span class="ml-[6px] font-bold">Page</span>
            <svg class="ml-auto w-[13px] h-[3px] mb-[2px] mr-[-5px]"><use href="#dots" /></svg>
          </div>
        </div>

        <!-- Sidebar tab bar -->
        <div class="flex-1 flex flex-col items-center pt-[6px]">
          <svg class="w-[18px] h-[18px]" viewBox="0 0 18 18"><path d="M1 2h16M1 6h16M1 10h16" stroke="#4a5560" stroke-width="1.500" /><path d="M6 13h6l-3 4z" /></svg>
          <div class="mt-[10px] w-[24px] h-px bg-[#b0b0b0]"></div>
          <div class="mt-[5px] w-[30px] h-[32px] flex items-center justify-center border border-[#b4b4b4] rounded-[4px]"><svg class="size-[24px]"><use href="#cubes" /></svg></div>
          <svg class="mt-[6px] size-[26px]"><use href="#stylist" /></svg>
          <svg class="mt-[9px] size-[26px]"><use href="#pics" /></svg>
          <svg class="mt-[10px] size-[26px]"><use href="#navig" /></svg>
        </div>
      </div>

      <!-- Status bar -->
      <div class="h-[21px] flex items-center bg-[#f0f0f0] border-t border-white shrink-0">
        <div class="w-[226px] pl-[10px] border-r border-[#a8a8a8]">Page 1 / 1</div>
        <div class="w-[207px] pl-[5px] border-r border-[#a8a8a8]">Default</div>
        <div class="w-[233px] text-center border-r border-[#a8a8a8]">English (UK)</div>
        <div class="w-[42px] text-center border-r border-[#a8a8a8]">INSRT</div>
        <div class="w-[34px] text-center border-r border-[#a8a8a8]">STD</div>
        <div class="w-[44px] pl-[4px] border-r border-[#a8a8a8]">*</div>
        <div class="w-[299px] pl-[125px] border-r border-[#a8a8a8]">Outline 1</div>
        <div class="w-[76px] h-[16px] flex items-center pl-[5px] gap-[3px] border-r border-[#a8a8a8]">
          <svg class="w-[14px] h-[14px]"><use href="#single" /></svg>
          <svg class="w-[22px] h-[14px]"><use href="#double" /></svg>
          <svg class="w-[22px] h-[14px]"><use href="#book" /></svg>
        </div>
        <div class="w-[143px] h-[16px] flex items-center pl-[5px] border-r border-[#a8a8a8]">
          <svg class="size-[12px]" viewBox="0 0 12 12"><circle cx="6" cy="6" r="5" fill="#fff" stroke="#4a5560" /><path d="M3 6h6" stroke="#123" /></svg>
          <div class="ml-[5px] relative w-[96px] h-[3px] bg-[#c8c8c8] border-y border-[#888]">
            <div class="absolute left-[42px] top-[-5px] size-[10px] rounded-full bg-[#9db8e4] border border-[#6a7f9e]"></div>
            <div class="absolute left-[17px] top-[-5px] w-px h-[11px] bg-[#888]"></div>
          </div>
          <svg class="ml-[5px] size-[12px]" viewBox="0 0 12 12"><circle cx="6" cy="6" r="5" fill="#fff" stroke="#4a5560" /><path d="M3 6h6M6 3v6" stroke="#123" /></svg>
        </div>
        <div class="pl-[5px]">100 %</div>
      </div>
    </div>

    <script>
      // Ruler ticks and numbers
      const NS = "http://www.w3.org/2000/svg";
      const CM = 37.8;
      function add(svg, tag, attrs, txt) {
        const el = document.createElementNS(NS, tag);
        for (const k in attrs) el.setAttribute(k, attrs[k]);
        if (txt) el.textContent = txt;
        svg.appendChild(el);
      }
      const font = { "font-family": "Noto Sans", "font-size": 11, fill: "#111" };

      const h = document.getElementById("hruler");
      add(h, "rect", { x: 0.5, y: 0.5, width: 793, height: 17, fill: "#f0f0f0", stroke: "#a8a8a8" });
      add(h, "rect", { x: 76, y: 1, width: 642, height: 16, fill: "#fff" });
      for (let q = -7; q <= 75; q++) {
        const x = 76 + (q * CM) / 4;
        if (q % 4 == 0) {
          if (q) add(h, "text", { x: x, y: 13, "text-anchor": "middle", ...font }, String(Math.abs(q / 4)));
        } else if (q % 2 == 0) add(h, "path", { d: `M${x} 7v4`, stroke: "#333" });
        else add(h, "rect", { x: x, y: 9, width: 1, height: 1, fill: "#333" });
      }
      for (let t = 76 + 47; t < 718; t += 47) add(h, "path", { d: `M${t - 3} 17.500h6M${t + 0.5} 14v3`, stroke: "#000", fill: "none" });
      for (const m of [76, 720])
        add(h, "path", { d: `M${m - 5} 1h10l-4 7v1l4 7h-10l4-7v-1z`, fill: "#f4f4f4", stroke: "#777" });

      const v = document.getElementById("vruler");
      add(v, "rect", { x: 0.5, y: 0.5, width: 17, height: 75, fill: "#f0f0f0", stroke: "#a8a8a8" });
      add(v, "rect", { x: 0, y: 76, width: 18, height: 459, fill: "#fff" });
      for (let q = -7; q <= 48; q++) {
        const y = 76 + (q * CM) / 4;
        if (q % 4 == 0) {
          if (q) add(v, "text", { transform: `translate(13 ${y}) rotate(-90)`, "text-anchor": "middle", ...font }, String(Math.abs(q / 4)));
        } else if (q % 2 == 0) add(v, "path", { d: `M7 ${y}h4`, stroke: "#333" });
        else add(v, "rect", { x: 9, y: y, width: 1, height: 1, fill: "#333" });
      }
    </script>
  </body>
</html>
